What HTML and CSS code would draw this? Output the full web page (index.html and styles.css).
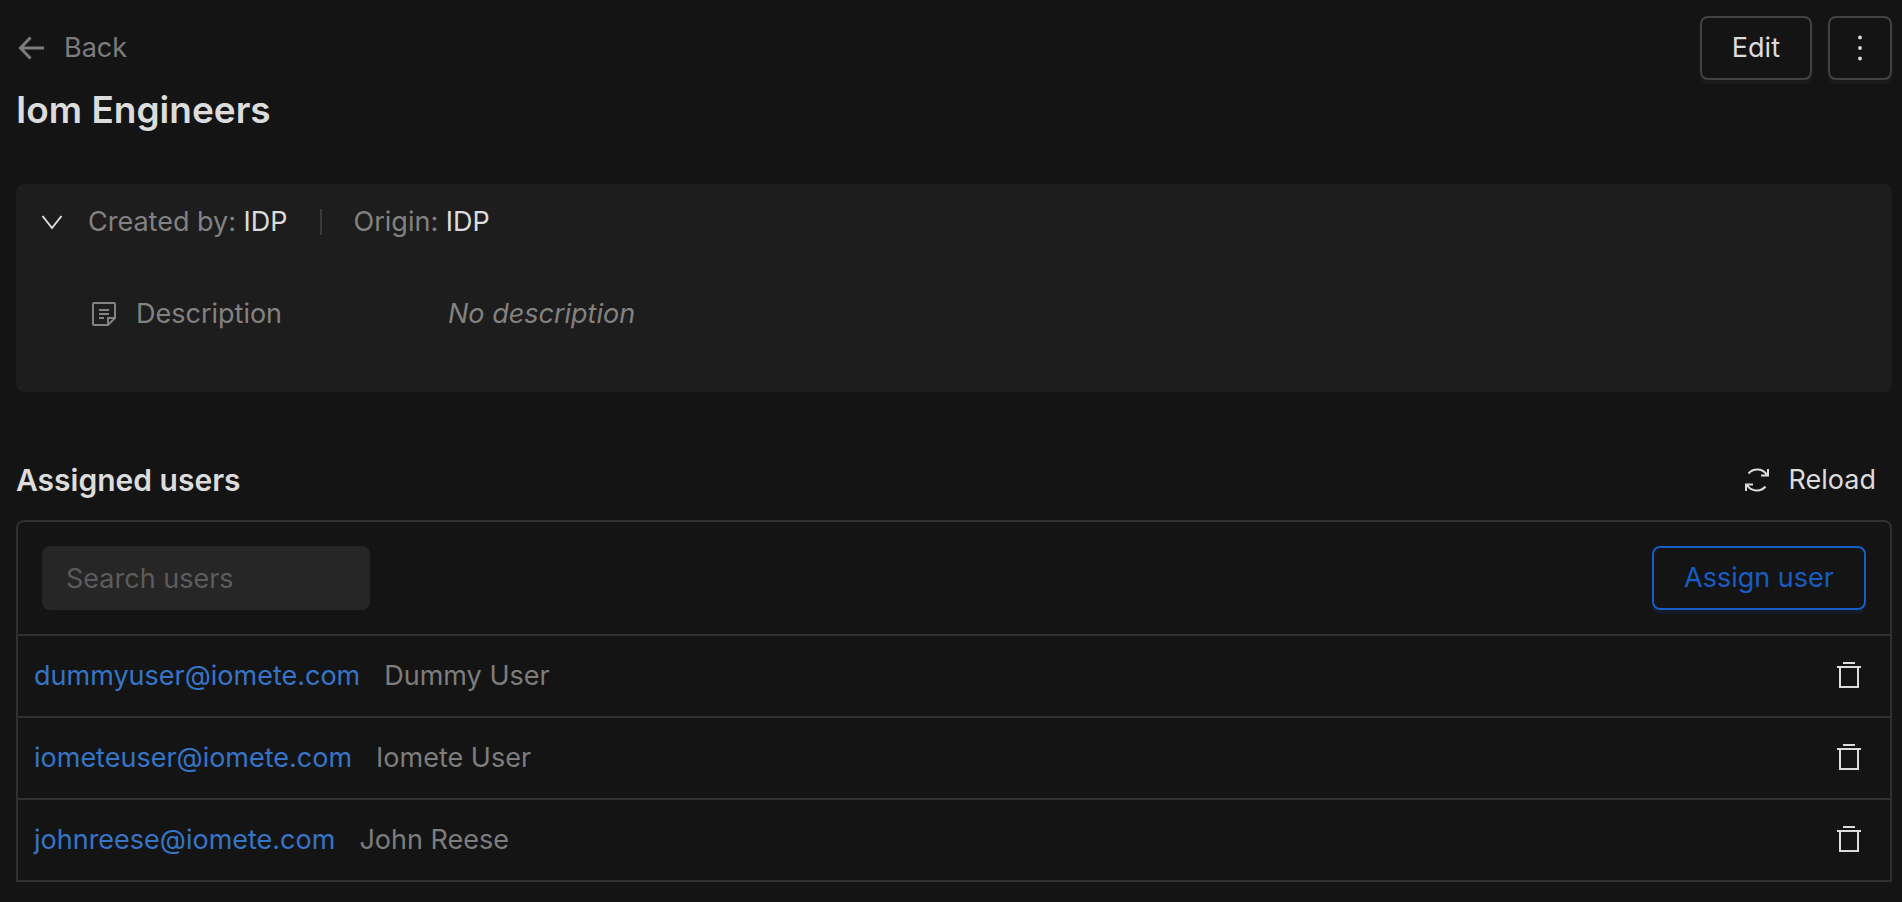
FILE: index.html
```html
<!DOCTYPE html>
<html lang="en">
<head>
<meta charset="UTF-8">
<meta name="viewport" content="width=device-width, initial-scale=1.0">
<title>Iom Engineers</title>
<link rel="stylesheet" href="styles.css">
</head>
<body>
<svg class="sprite" aria-hidden="true">
  <symbol id="trash" viewBox="0 0 26 28">
    <path d="M7 1h12M1 5h24M4 5v20h18V5"/>
  </symbol>
</svg>

<header class="page-header">
  <div class="heading">
    <a class="back" href="#">
      <svg class="icon icon-bold" width="28" height="28" viewBox="0 0 28 28"><path d="M28 14H5M14.500 3.500L4.500 14l10 10.500"/></svg>
      Back
    </a>
    <h1>Iom Engineers</h1>
  </div>
  <div class="actions">
    <button class="btn" type="button">Edit</button>
    <button class="btn btn-more" type="button" aria-label="More">
      <svg width="28" height="28" viewBox="0 0 28 28"><circle cx="14" cy="3.500" r="1.900"/><circle cx="14" cy="14" r="1.900"/><circle cx="14" cy="24.500" r="1.900"/></svg>
    </button>
  </div>
</header>

<section class="info">
  <div class="info-head">
    <button class="toggle" type="button" aria-label="Collapse">
      <svg class="icon" width="24" height="24" viewBox="0 0 24 24"><path d="M2.500 6L12 18l9.500-12"/></svg>
    </button>
    <span>Created by: <b>IDP</b></span>
    <span class="divider"></span>
    <span>Origin: <b>IDP</b></span>
  </div>
  <dl class="info-row">
    <dt>
      <svg class="icon" width="24" height="24" viewBox="0 0 24 24"><path d="M16 23H2a1 1 0 0 1-1-1V2a1 1 0 0 1 1-1h20a1 1 0 0 1 1 1v14l-7 7v-7h7M7 8h10M7 12h10M7 16h5"/></svg>
      Description
    </dt>
    <dd>No description</dd>
  </dl>
</section>

<section class="users">
  <div class="users-head">
    <h2>Assigned users</h2>
    <button class="reload" type="button">
      <svg class="icon" width="28" height="28" viewBox="0 0 28 28"><path d="M5.500 7.500a11.500 11.500 0 0 1 18.500 1.500M25 3v6.500h-7M22.500 20.500a11.500 11.500 0 0 1-18.500-1.500M3 25v-6.500h7"/></svg>
      Reload
    </button>
  </div>
  <div class="panel">
    <div class="toolbar">
      <input class="search" type="text" placeholder="Search users" aria-label="Search users">
      <button class="btn btn-primary" type="button">Assign user</button>
    </div>
    <ul class="user-list">
      <li>
        <a href="#">dummyuser@iomete.com</a>
        <span>Dummy User</span>
        <button class="remove" type="button" aria-label="Remove Dummy User"><svg class="icon" width="26" height="28"><use href="#trash"/></svg></button>
      </li>
      <li>
        <a href="#">iometeuser@iomete.com</a>
        <span>Iomete User</span>
        <button class="remove" type="button" aria-label="Remove Iomete User"><svg class="icon" width="26" height="28"><use href="#trash"/></svg></button>
      </li>
      <li>
        <a href="#">johnreese@iomete.com</a>
        <span>John Reese</span>
        <button class="remove" type="button" aria-label="Remove John Reese"><svg class="icon" width="26" height="28"><use href="#trash"/></svg></button>
      </li>
    </ul>
  </div>
</section>
</body>
</html>
```

FILE: styles.css
```css
* {
  box-sizing: border-box;
}
body {
  margin: 0;
  padding: 16px 10px 16px 16px;
  background-color: #141414;
  color: #dcdcdc;
  font-family: Inter, "Liberation Sans", sans-serif;
  font-size: 27px;
  line-height: 44px;
}
h1, h2, ul, dl, dd {
  margin: 0;
  padding: 0;
}
h1, h2 {
  font-weight: 600;
}
h1 {
  font-size: 37px;
  line-height: 56px;
}
h2 {
  font-size: 30px;
}
a {
  color: #3674c8;
  text-decoration: none;
}
button, input {
  font: inherit;
  color: inherit;
}
button {
  padding: 0;
  border: none;
  background: none;
  cursor: pointer;
}
svg {
  display: block;
  fill: currentColor;
}
.sprite {
  display: none;
}
.icon {
  fill: none;
  stroke: currentColor;
  stroke-width: 2;
}
.icon-bold {
  stroke-width: 3;
}
.page-header {
  display: flex;
  justify-content: space-between;
  align-items: flex-start;
}
.heading {
  padding-top: 10px;
}
.back {
  display: flex;
  align-items: center;
  gap: 20px;
  color: #7d7d7d;
}
.heading h1 {
  margin-top: 12px;
}
.actions {
  display: flex;
  gap: 16px;
}
.btn {
  height: 64px;
  padding: 0 30px;
  border: 2px solid #424242;
  border-radius: 8px;
  box-shadow: 0 4px 0 #1b1b1b;
}
.btn-more {
  padding: 0 16px;
}
.btn-primary {
  border-color: #165dc6;
  color: #165dc6;
  box-shadow: 0 4px 0 #141a26;
}
.info {
  margin-top: 46px;
  padding: 16px 24px 56px;
  border-radius: 8px;
  background-color: #1d1d1d;
  color: #828282;
}
.info-head {
  display: flex;
  align-items: center;
}
.info-head b {
  font-weight: 400;
  color: #dcdcdc;
}
.toggle {
  margin-right: 24px;
  color: #dcdcdc;
}
.divider {
  width: 2px;
  height: 26px;
  margin: 0 32px;
  background-color: #3a3a3a;
}
.info-row {
  display: flex;
  padding: 48px 0 0 52px;
}
.info-row dt {
  display: flex;
  align-items: center;
  gap: 20px;
  width: 356px;
}
.info-row dd {
  font-style: italic;
}
.users {
  margin-top: 66px;
}
.users-head {
  display: flex;
  justify-content: space-between;
  align-items: center;
  padding-right: 16px;
}
.reload {
  display: flex;
  align-items: center;
  gap: 18px;
}
.panel {
  margin-top: 18px;
  border: 2px solid #303030;
  border-radius: 8px 8px 0 0;
}
.toolbar {
  display: flex;
  justify-content: space-between;
  padding: 24px;
}
.search {
  width: 328px;
  height: 64px;
  padding: 0 24px;
  border: none;
  border-radius: 8px;
  outline: none;
  background-color: #262626;
}
.search::placeholder {
  color: #5c5c5c;
  opacity: 1;
}
.user-list {
  list-style: none;
}
.user-list li {
  display: flex;
  align-items: center;
  gap: 24px;
  height: 82px;
  padding: 0 28px 0 16px;
  border-top: 2px solid #303030;
}
.user-list span {
  color: #7d7d7d;
}
.remove {
  margin-left: auto;
}
```
